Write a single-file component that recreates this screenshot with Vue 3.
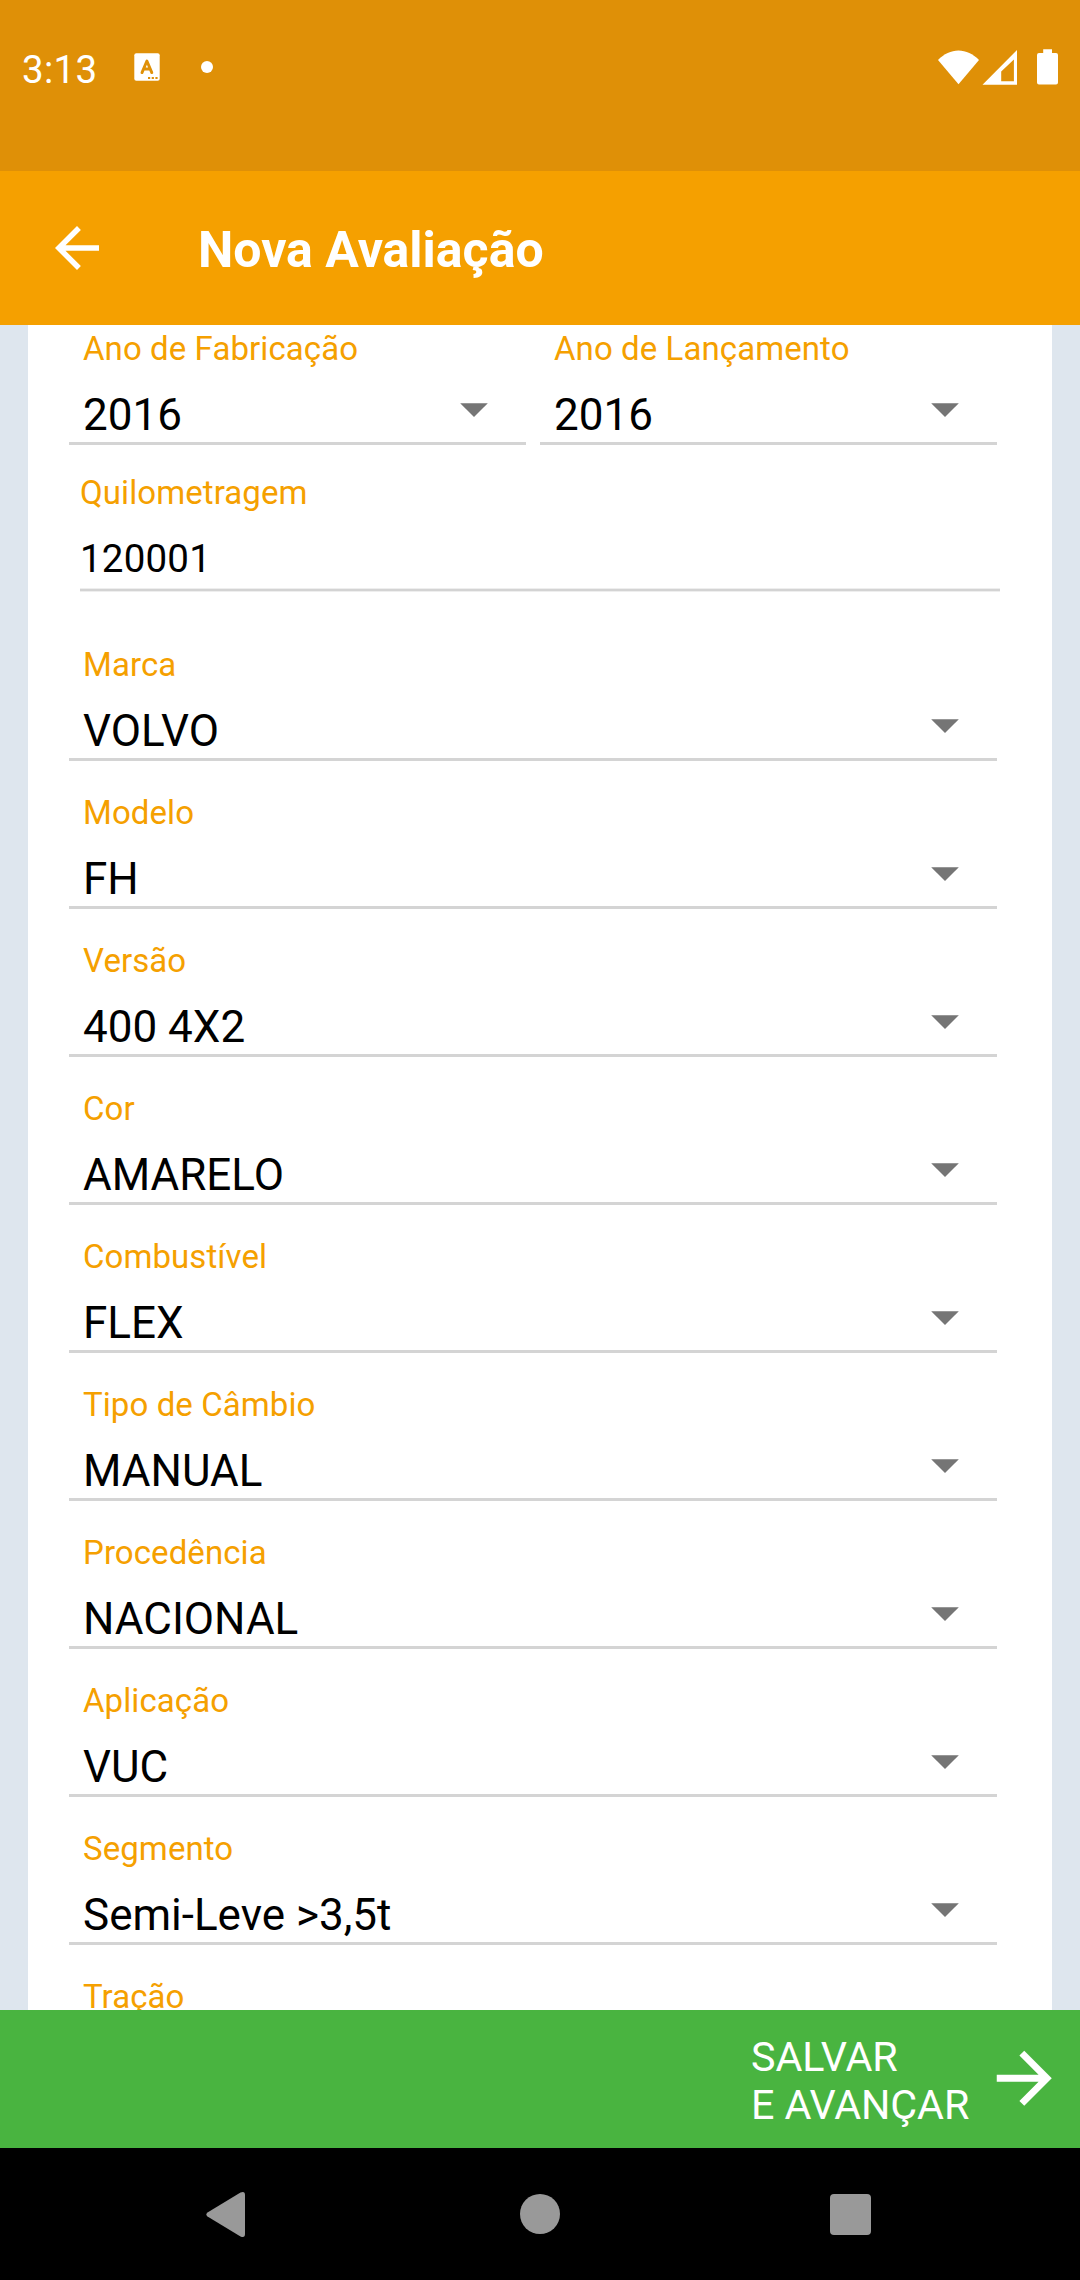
<script setup>
const years = [
  { label: 'Ano de Fabricação', value: '2016' },
  { label: 'Ano de Lançamento', value: '2016' },
]

const fields = [
  { label: 'Marca', value: 'VOLVO' },
  { label: 'Modelo', value: 'FH' },
  { label: 'Versão', value: '400 4X2' },
  { label: 'Cor', value: 'AMARELO' },
  { label: 'Combustível', value: 'FLEX' },
  { label: 'Tipo de Câmbio', value: 'MANUAL' },
  { label: 'Procedência', value: 'NACIONAL' },
  { label: 'Aplicação', value: 'VUC' },
  { label: 'Segmento', value: 'Semi-Leve >3,5t' },
  { label: 'Tração', value: '' },
]
</script>

<template>
  <div class="screen">
    <div class="status">
      <span class="clock">3:13</span>
      <svg class="keyboard" width="26" height="28" viewBox="0 0 26 28">
        <rect x="0.3" y="0.2" width="25.4" height="27.6" rx="2" fill="#fff" />
        <path d="M8 19.6 12.9 8 17.8 19.6M9.7 16h6.4" fill="none" stroke="#df9007" stroke-width="2.9" stroke-linecap="round" stroke-linejoin="round" />
        <path d="M14 24h2.2v2.1H14zM17.7 24h2.2v2.1h-2.2zM21.4 24h2.2v2.1h-2.2z" fill="#df9007" />
      </svg>
      <span class="dot"></span>
      <svg class="signals" width="122" height="38" viewBox="0 0 122 38" fill="#fff">
        <path d="M0 12C6 6 13 2.5 20.5 2.5S35 6 41 12L20.5 36.3Z" />
        <path d="M44.5 36.8 79 2v34.8ZM63.2 33.3h12.700V11.400L63.200 23.600Z" fill-rule="evenodd" />
        <path d="M105.200 1.300h8.800V5h4a2 2 0 0 1 2 2v27.500a2 2 0 0 1-2 2h-17a2 2 0 0 1-2-2V7a2 2 0 0 1 2-2h4.200Z" />
      </svg>
    </div>

    <header class="appbar">
      <svg width="66" height="66" viewBox="0 0 24 24" fill="#fff">
        <path d="M20 11H7.830l5.590-5.590L12 4l-8 8 8 8 1.410-1.410L7.830 13H20z" />
      </svg>
      <h1>Nova Avaliação</h1>
    </header>

    <main class="viewport">
      <section class="panel">
        <div class="years">
          <div v-for="y in years" :key="y.label" class="field">
            <div class="label">{{ y.label }}</div>
            <div class="select">
              <span>{{ y.value }}</span>
              <svg class="caret" width="28" height="14" viewBox="0 0 28 14"><path d="M0.200 0.200h27.600L14 14z" fill="#757575" /></svg>
            </div>
          </div>
        </div>

        <div class="odometer">
          <div class="label">Quilometragem</div>
          <div class="number">120001</div>
          <div class="underline"></div>
        </div>

        <div v-for="f in fields" :key="f.label" class="field">
          <div class="label">{{ f.label }}</div>
          <div class="select">
            <span>{{ f.value }}</span>
            <svg class="caret" width="28" height="14" viewBox="0 0 28 14"><path d="M0.200 0.200h27.600L14 14z" fill="#757575" /></svg>
          </div>
        </div>
      </section>
    </main>

    <footer class="save">
      <div class="save-text">SALVAR<br />E AVANÇAR</div>
      <svg width="82.500" height="82.500" viewBox="0 0 24 24" fill="#fff">
        <path d="M12 4l-1.410 1.410L16.170 11H4v2h12.170l-5.580 5.590L12 20l8-8z" />
      </svg>
    </footer>

    <nav class="nav">
      <svg width="44" height="48" viewBox="0 0 44 48"><path d="M2.500 22.600 35.500 2.600Q40 .8 40 5v39q0 4.200-4.500 2.400L2.500 26.400Q.2 24.500 2.500 22.600Z" fill="#999" /></svg>
      <span class="home"></span>
      <span class="recent"></span>
    </nav>
  </div>
</template>

<style>
body {
  margin: 0;
}
</style>

<style scoped>
.screen {
  width: 1080px;
  height: 2280px;
  display: flex;
  flex-direction: column;
  overflow: hidden;
  font-family: Roboto, sans-serif;
  background: #000;
}

.status {
  height: 171px;
  flex: none;
  box-sizing: border-box;
  padding: 46px 20px 0 22px;
  display: flex;
  align-items: flex-start;
  background: #df9007;
  color: #fff;
}

.clock {
  width: 111.500px;
  margin-top: 1px;
  font-size: 38.500px;
  line-height: 46px;
  letter-spacing: 0.3px;
}

.keyboard {
  margin-top: 7px;
}

.dot {
  width: 12px;
  height: 12px;
  margin: 15px 0 0 41.500px;
  border-radius: 50%;
  background: #fff;
}

.signals {
  margin: 2px 0 0 auto;
}

.appbar {
  height: 154px;
  flex: none;
  box-sizing: border-box;
  padding-left: 44px;
  display: flex;
  align-items: center;
  background: #f5a000;
  color: #fff;
}

h1 {
  margin: 4px 0 0 88px;
  font-size: 50px;
  line-height: 58px;
  font-weight: 700;
}

.viewport {
  height: 1685px;
  flex: none;
  overflow: hidden;
  padding: 0 28px;
  background: #dee6ee;
}

.panel {
  height: 1900px;
  padding: 0 55px 0 41px;
  background: #fff;
}

.years {
  display: grid;
  grid-template-columns: 457px 457px;
  column-gap: 14px;
  margin-top: -28px;
}

.field {
  height: 148px;
  box-sizing: border-box;
  padding-top: 32px;
  border-bottom: 3px solid #d4d4d4;
}

.label {
  padding-left: 14px;
  font-size: 33px;
  line-height: 40px;
  letter-spacing: 0.080px;
  color: #f5a000;
}

.select {
  height: 52px;
  margin-top: 20px;
  padding: 0 38px 0 14px;
  display: flex;
  justify-content: space-between;
  align-items: flex-start;
  font-size: 44px;
  line-height: 52px;
  color: #000;
}

.caret {
  margin-top: 14px;
}

.odometer {
  height: 168px;
  box-sizing: border-box;
  margin: 0 -3px 0 11px;
  padding-top: 28px;
}

.odometer .label {
  padding-left: 0;
}

.number {
  margin-top: 23px;
  font-size: 38.500px;
  line-height: 46px;
  letter-spacing: 0.200px;
  color: #000;
}

.underline {
  height: 2px;
  margin-top: 6px;
  border-top: 1px solid #eee;
  border-bottom: 1px solid #eee;
  background: #d3d3d3;
}

.save {
  height: 138px;
  flex: none;
  box-sizing: border-box;
  padding-right: 14.500px;
  display: flex;
  justify-content: flex-end;
  align-items: center;
  background: #49b440;
  color: #fff;
}

.save svg {
  margin-top: -1px;
}

.save-text {
  width: 232px;
  margin-top: 3px;
  font-size: 41.250px;
  line-height: 48px;
  letter-spacing: -0.100px;
  white-space: nowrap;
}

.nav {
  height: 132px;
  flex: none;
  box-sizing: border-box;
  padding: 0 209px 0 205px;
  display: flex;
  justify-content: space-between;
  align-items: center;
}

.home {
  width: 40px;
  height: 40px;
  border-radius: 50%;
  background: #999;
}

.recent {
  width: 41px;
  height: 41px;
  border-radius: 4px;
  background: #999;
}
</style>
